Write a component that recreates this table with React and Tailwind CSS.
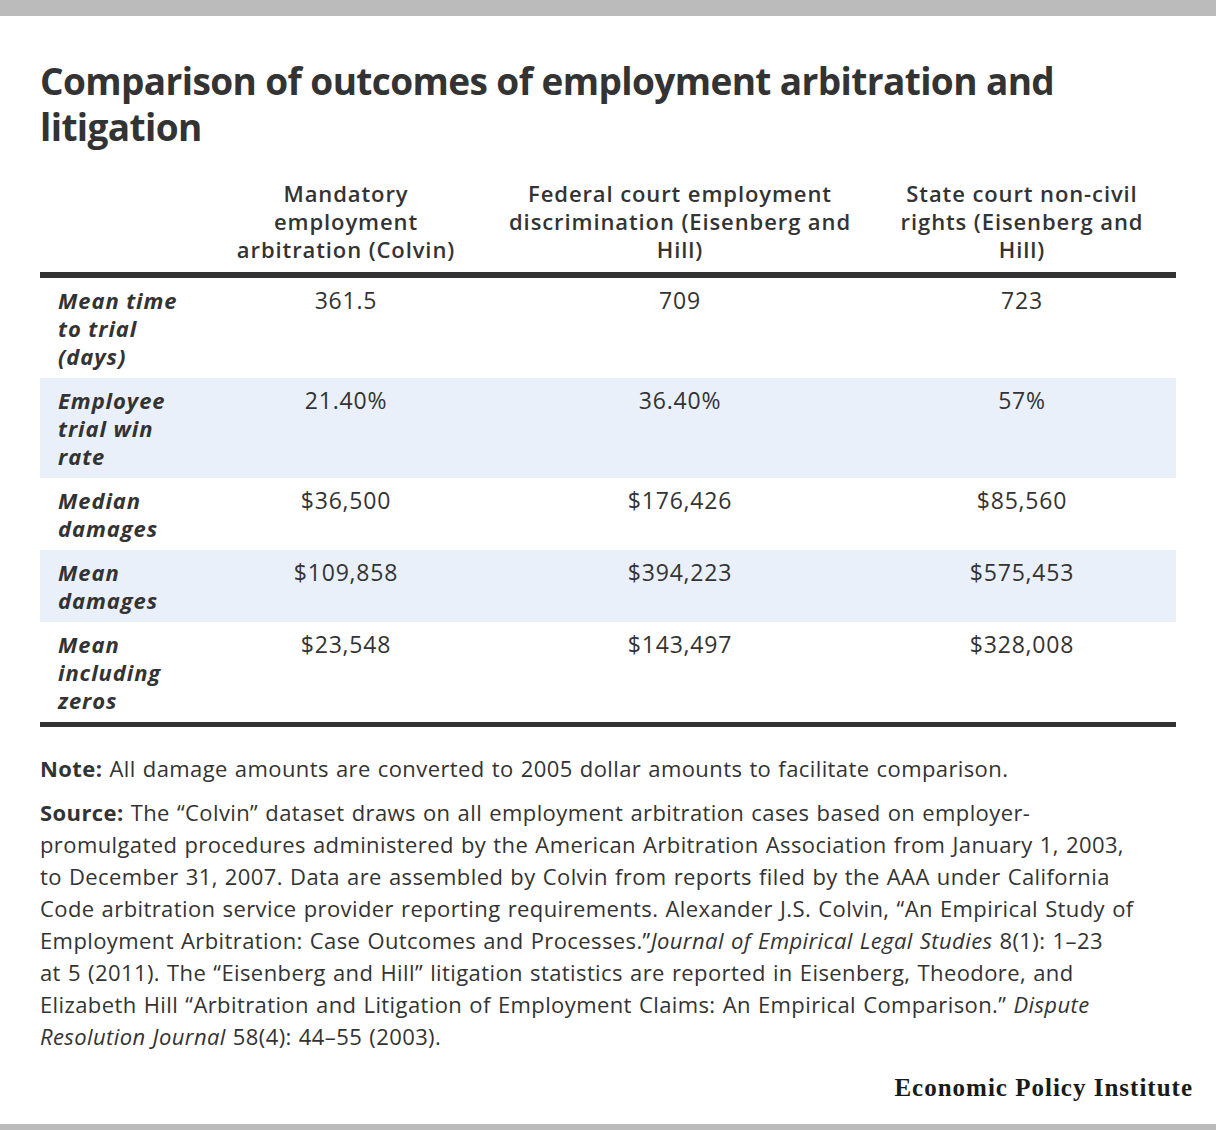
import React from 'react';

const rows = [
  { label: ['Mean time', 'to trial', '(days)'], values: ['361.5', '709', '723'] },
  { label: ['Employee', 'trial win', 'rate'], values: ['21.40%', '36.40%', '57%'] },
  { label: ['Median', 'damages'], values: ['$36,500', '$176,426', '$85,560'] },
  { label: ['Mean', 'damages'], values: ['$109,858', '$394,223', '$575,453'] },
  { label: ['Mean', 'including', 'zeros'], values: ['$23,548', '$143,497', '$328,008'] },
];

const headers = [
  ['Mandatory', 'employment', 'arbitration (Colvin)'],
  ['Federal court employment', 'discrimination (Eisenberg and', 'Hill)'],
  ['State court non-civil', 'rights (Eisenberg and', 'Hill)'],
];

const grid = 'grid grid-cols-[160px_292px_376px_308px]';

export default function App() {
  return (
    <div className="w-[1216px] h-[1130px] bg-white flex flex-col text-[#333333] font-['Open_Sans','Noto_Sans',sans-serif] border-t-[16px] border-b-[6px] border-[#bbbbbb]">
      <div className="px-10 flex-1 flex flex-col">
        {/* title */}
        <h1 className="mt-[42px] text-[37px] leading-[46px] font-bold tracking-[-0.6px] whitespace-nowrap">
          Comparison of outcomes of employment arbitration and
          <br />
          litigation
        </h1>

        {/* table */}
        <div className="mt-[29px]">
          <div className={`${grid} border-b-[6px] border-[#333333] pb-[9px]`}>
            <div />
            {headers.map((h, i) => (
              <div key={i} className="text-center text-[22px] leading-[28px] font-semibold tracking-[0.9px] whitespace-nowrap">
                {h.map((l, j) => (
                  <div key={j}>{l}</div>
                ))}
              </div>
            ))}
          </div>
          <div className="border-b-[5px] border-[#333333]">
            {rows.map((r, i) => (
              <div key={i} className={`${grid} py-2 text-[22px] leading-[28px] ${i % 2 === 1 ? 'bg-[#e9f0f9]' : ''}`}>
                <div className="pl-[18px] font-bold italic tracking-[0.9px] whitespace-nowrap">
                  {r.label.map((l, j) => (
                    <div key={j}>{l}</div>
                  ))}
                </div>
                {r.values.map((v, j) => (
                  <div key={j} className="text-center text-[23px] tracking-[0.8px]">{v}</div>
                ))}
              </div>
            ))}
          </div>
        </div>

        {/* notes */}
        <div className="mt-[25px] text-[22px] leading-[32px] tracking-[0.4px] [word-spacing:1px] whitespace-nowrap">
          <p>
            <span className="font-bold">Note:</span> All damage amounts are converted to 2005 dollar amounts to facilitate comparison.
          </p>
          <p className="mt-[12px]">
            <span className="font-bold">Source:</span> The “Colvin” dataset draws on all employment arbitration cases based on employer-
            <br />
            promulgated procedures administered by the American Arbitration Association from January 1, 2003,
            <br />
            to December 31, 2007. Data are assembled by Colvin from reports filed by the AAA under California
            <br />
            Code arbitration service provider reporting requirements. Alexander J.S. Colvin, “An Empirical Study of
            <br />
            Employment Arbitration: Case Outcomes and Processes.”<span className="italic">Journal of Empirical Legal Studies</span> 8(1): 1–23
            <br />
            at 5 (2011). The “Eisenberg and Hill” litigation statistics are reported in Eisenberg, Theodore, and
            <br />
            Elizabeth Hill “Arbitration and Litigation of Employment Claims: An Empirical Comparison.” <span className="italic">Dispute</span>
            <br />
            <span className="italic">Resolution Journal</span> 58(4): 44–55 (2003).
          </p>
        </div>

        <div className="mt-auto mb-[22px] -mr-[17px] text-right font-['Liberation_Serif',serif] font-bold text-[25px] leading-[28px] tracking-[1px] text-[#1a1a1a]">
          Economic Policy Institute
        </div>
      </div>
    </div>
  );
}
